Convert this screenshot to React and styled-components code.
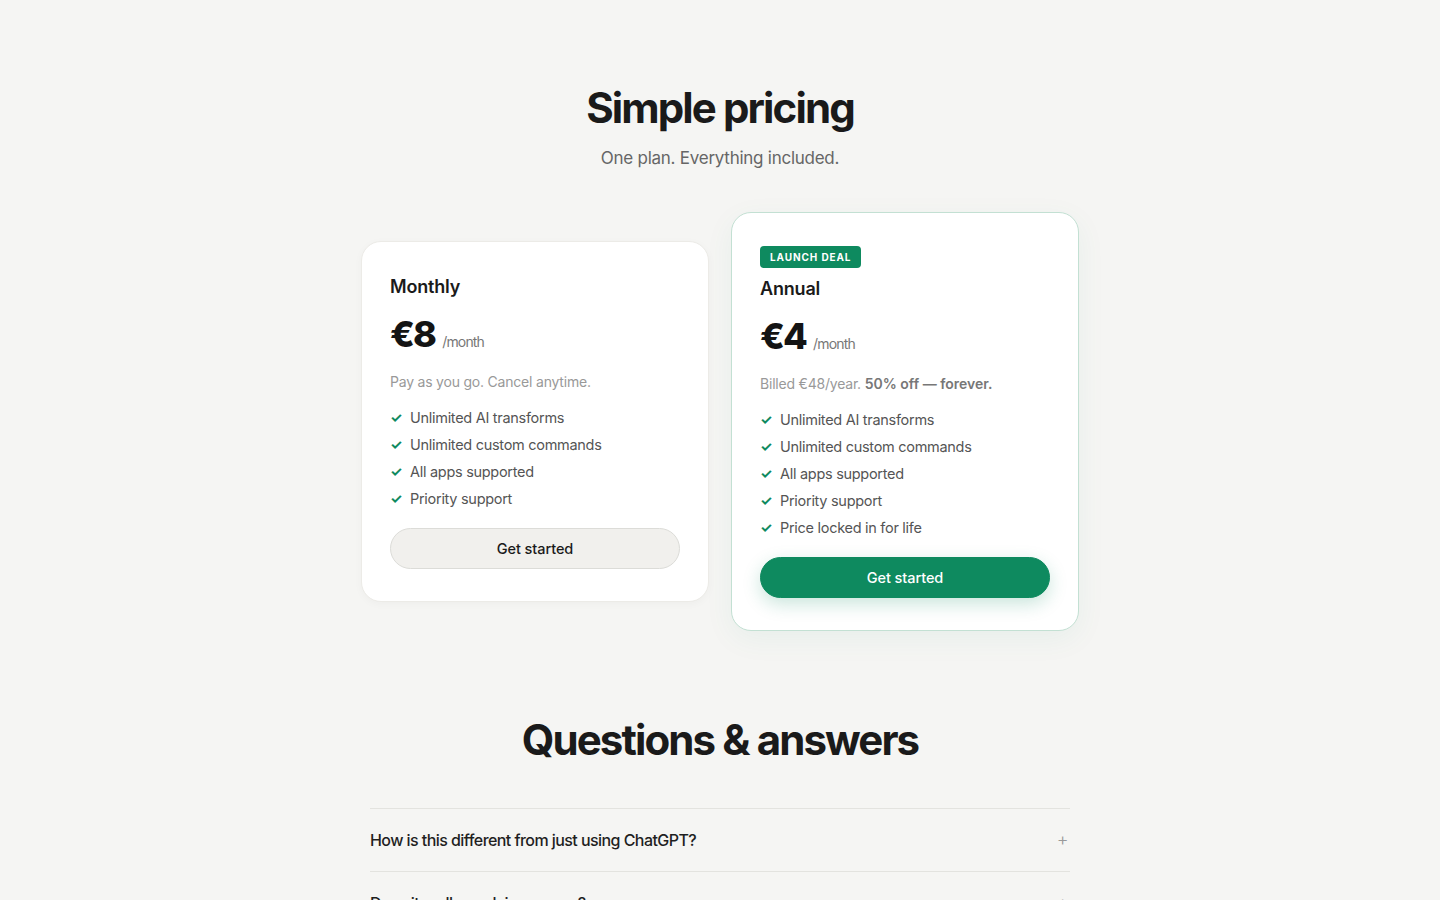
import React from "react";
import styled, { createGlobalStyle } from "styled-components";

const GlobalStyle = createGlobalStyle`
  * { box-sizing: border-box; }
  body {
    margin: 0;
    background: #f5f5f3;
    font-family: Inter, "Noto Sans", sans-serif;
    color: #1a1a1a;
    -webkit-font-smoothing: antialiased;
  }
`;

const Page = styled.div`
  min-height: 100vh;
  overflow: hidden;
`;

const Section = styled.section`
  display: flex;
  flex-direction: column;
  align-items: center;
  padding: ${({ $top }) => $top}px 0 0;
`;

const Heading = styled.h2`
  margin: 0;
  font-size: 42px;
  line-height: 1.2;
  font-weight: 700;
  letter-spacing: -0.045em;
  color: #1a1a1a;
`;

const Sub = styled.p`
  margin: 13px 0 0;
  font-size: 17px;
  line-height: 1.5;
  color: #666;
  letter-spacing: -0.015em;
`;

const Cards = styled.div`
  display: flex;
  align-items: center;
  gap: 22px;
  margin-top: 40px;
`;

const Card = styled.div`
  width: 348px;
  background: #fff;
  border-radius: 20px;
  padding: 32px 28px;
  border: 1px solid ${({ $featured }) => ($featured ? "#c3e0d3" : "#ecebe7")};
  box-shadow: ${({ $featured }) =>
    $featured
      ? "0 8px 30px rgba(14, 138, 95, 0.06)"
      : "0 2px 8px rgba(0, 0, 0, 0.03)"};
`;

const Badge = styled.span`
  display: inline-flex;
  align-items: center;
  height: 22px;
  padding: 0 10px;
  border-radius: 4px;
  background: #0e8a5f;
  color: #fff;
  font-size: 10px;
  font-weight: 700;
  letter-spacing: 0.09em;
  margin-bottom: 8px;
`;

const PlanName = styled.h3`
  margin: 0;
  font-size: 18px;
  line-height: 26px;
  font-weight: 600;
  letter-spacing: -0.01em;
  color: #1a1a1a;
`;

const PriceRow = styled.div`
  display: flex;
  align-items: baseline;
  gap: 7px;
  margin-top: 11px;
`;

const Amount = styled.span`
  font-size: 36px;
  line-height: 46px;
  font-weight: 800;
  letter-spacing: -0.05em;
  color: #141414;
`;

const Per = styled.span`
  font-size: 14px;
  color: #777;
  letter-spacing: -0.06em;
`;

const Note = styled.p`
  margin: 15px 0 0;
  font-size: 14px;
  line-height: 20px;
  color: #999;
  letter-spacing: -0.015em;

  b {
    font-weight: 600;
    color: #777;
    letter-spacing: 0;
  }
`;

const Features = styled.ul`
  list-style: none;
  margin: 15px 0 0;
  padding: 0;
  display: flex;
  flex-direction: column;
  gap: 5px;
`;

const Feature = styled.li`
  display: flex;
  align-items: center;
  gap: 10px;
  font-size: 14.5px;
  line-height: 22px;
  color: #555;
  letter-spacing: -0.02em;
`;

const Check = styled.span`
  width: 10px;
  font-size: 14px;
  font-weight: 700;
  color: #0e8a5f;
`;

const Button = styled.button`
  display: block;
  width: 100%;
  height: 41px;
  margin-top: 18px;
  border-radius: 999px;
  font-family: inherit;
  font-size: 14.5px;
  font-weight: 500;
  letter-spacing: -0.005em;
  cursor: pointer;
  border: 1px solid ${({ $primary }) => ($primary ? "#0e8a5f" : "#dcdcd8")};
  background: ${({ $primary }) => ($primary ? "#0e8a5f" : "#f1f0ed")};
  color: ${({ $primary }) => ($primary ? "#fff" : "#1a1a1a")};
  box-shadow: ${({ $primary }) =>
    $primary ? "0 6px 18px rgba(14, 138, 95, 0.22)" : "none"};
`;

const FaqList = styled.div`
  width: 700px;
  margin-top: 43px;
  border-top: 1px solid #e3e3df;
`;

const FaqRow = styled.div`
  display: flex;
  align-items: center;
  justify-content: space-between;
  padding: 20px 0;
  border-bottom: 1px solid #e3e3df;
  font-size: 16px;
  line-height: 22px;
  font-weight: 500;
  letter-spacing: -0.035em;
  color: #1f1f1f;
`;

const Plus = styled.span`
  font-size: 18px;
  font-weight: 300;
  color: #999;
  margin-right: 2px;
`;

const plans = [
  {
    name: "Monthly",
    price: "€8",
    note: <>Pay as you go. Cancel anytime.</>,
    features: [
      "Unlimited AI transforms",
      "Unlimited custom commands",
      "All apps supported",
      "Priority support",
    ],
  },
  {
    name: "Annual",
    price: "€4",
    featured: true,
    note: (
      <>
        Billed €48/year. <b>50% off — forever.</b>
      </>
    ),
    features: [
      "Unlimited AI transforms",
      "Unlimited custom commands",
      "All apps supported",
      "Priority support",
      "Price locked in for life",
    ],
  },
];

const faqs = [
  "How is this different from just using ChatGPT?",
  "Does it really work in any app?",
  "Which AI models does it use?",
];

export default function App() {
  return (
    <Page>
      <GlobalStyle />
      <Section $top={83}>
        <Heading>Simple pricing</Heading>
        <Sub>One plan. Everything included.</Sub>
        <Cards>
          {plans.map((p) => (
            <Card key={p.name} $featured={p.featured}>
              {p.featured && <Badge>LAUNCH DEAL</Badge>}
              <PlanName>{p.name}</PlanName>
              <PriceRow>
                <Amount>{p.price}</Amount>
                <Per>/month</Per>
              </PriceRow>
              <Note>{p.note}</Note>
              <Features>
                {p.features.map((f) => (
                  <Feature key={f}>
                    <Check>✓</Check>
                    {f}
                  </Feature>
                ))}
              </Features>
              <Button $primary={p.featured}>Get started</Button>
            </Card>
          ))}
        </Cards>
      </Section>
      <Section $top={84}>
        <Heading>Questions &amp; answers</Heading>
        <FaqList>
          {faqs.map((q) => (
            <FaqRow key={q}>
              {q}
              <Plus>+</Plus>
            </FaqRow>
          ))}
        </FaqList>
      </Section>
    </Page>
  );
}
